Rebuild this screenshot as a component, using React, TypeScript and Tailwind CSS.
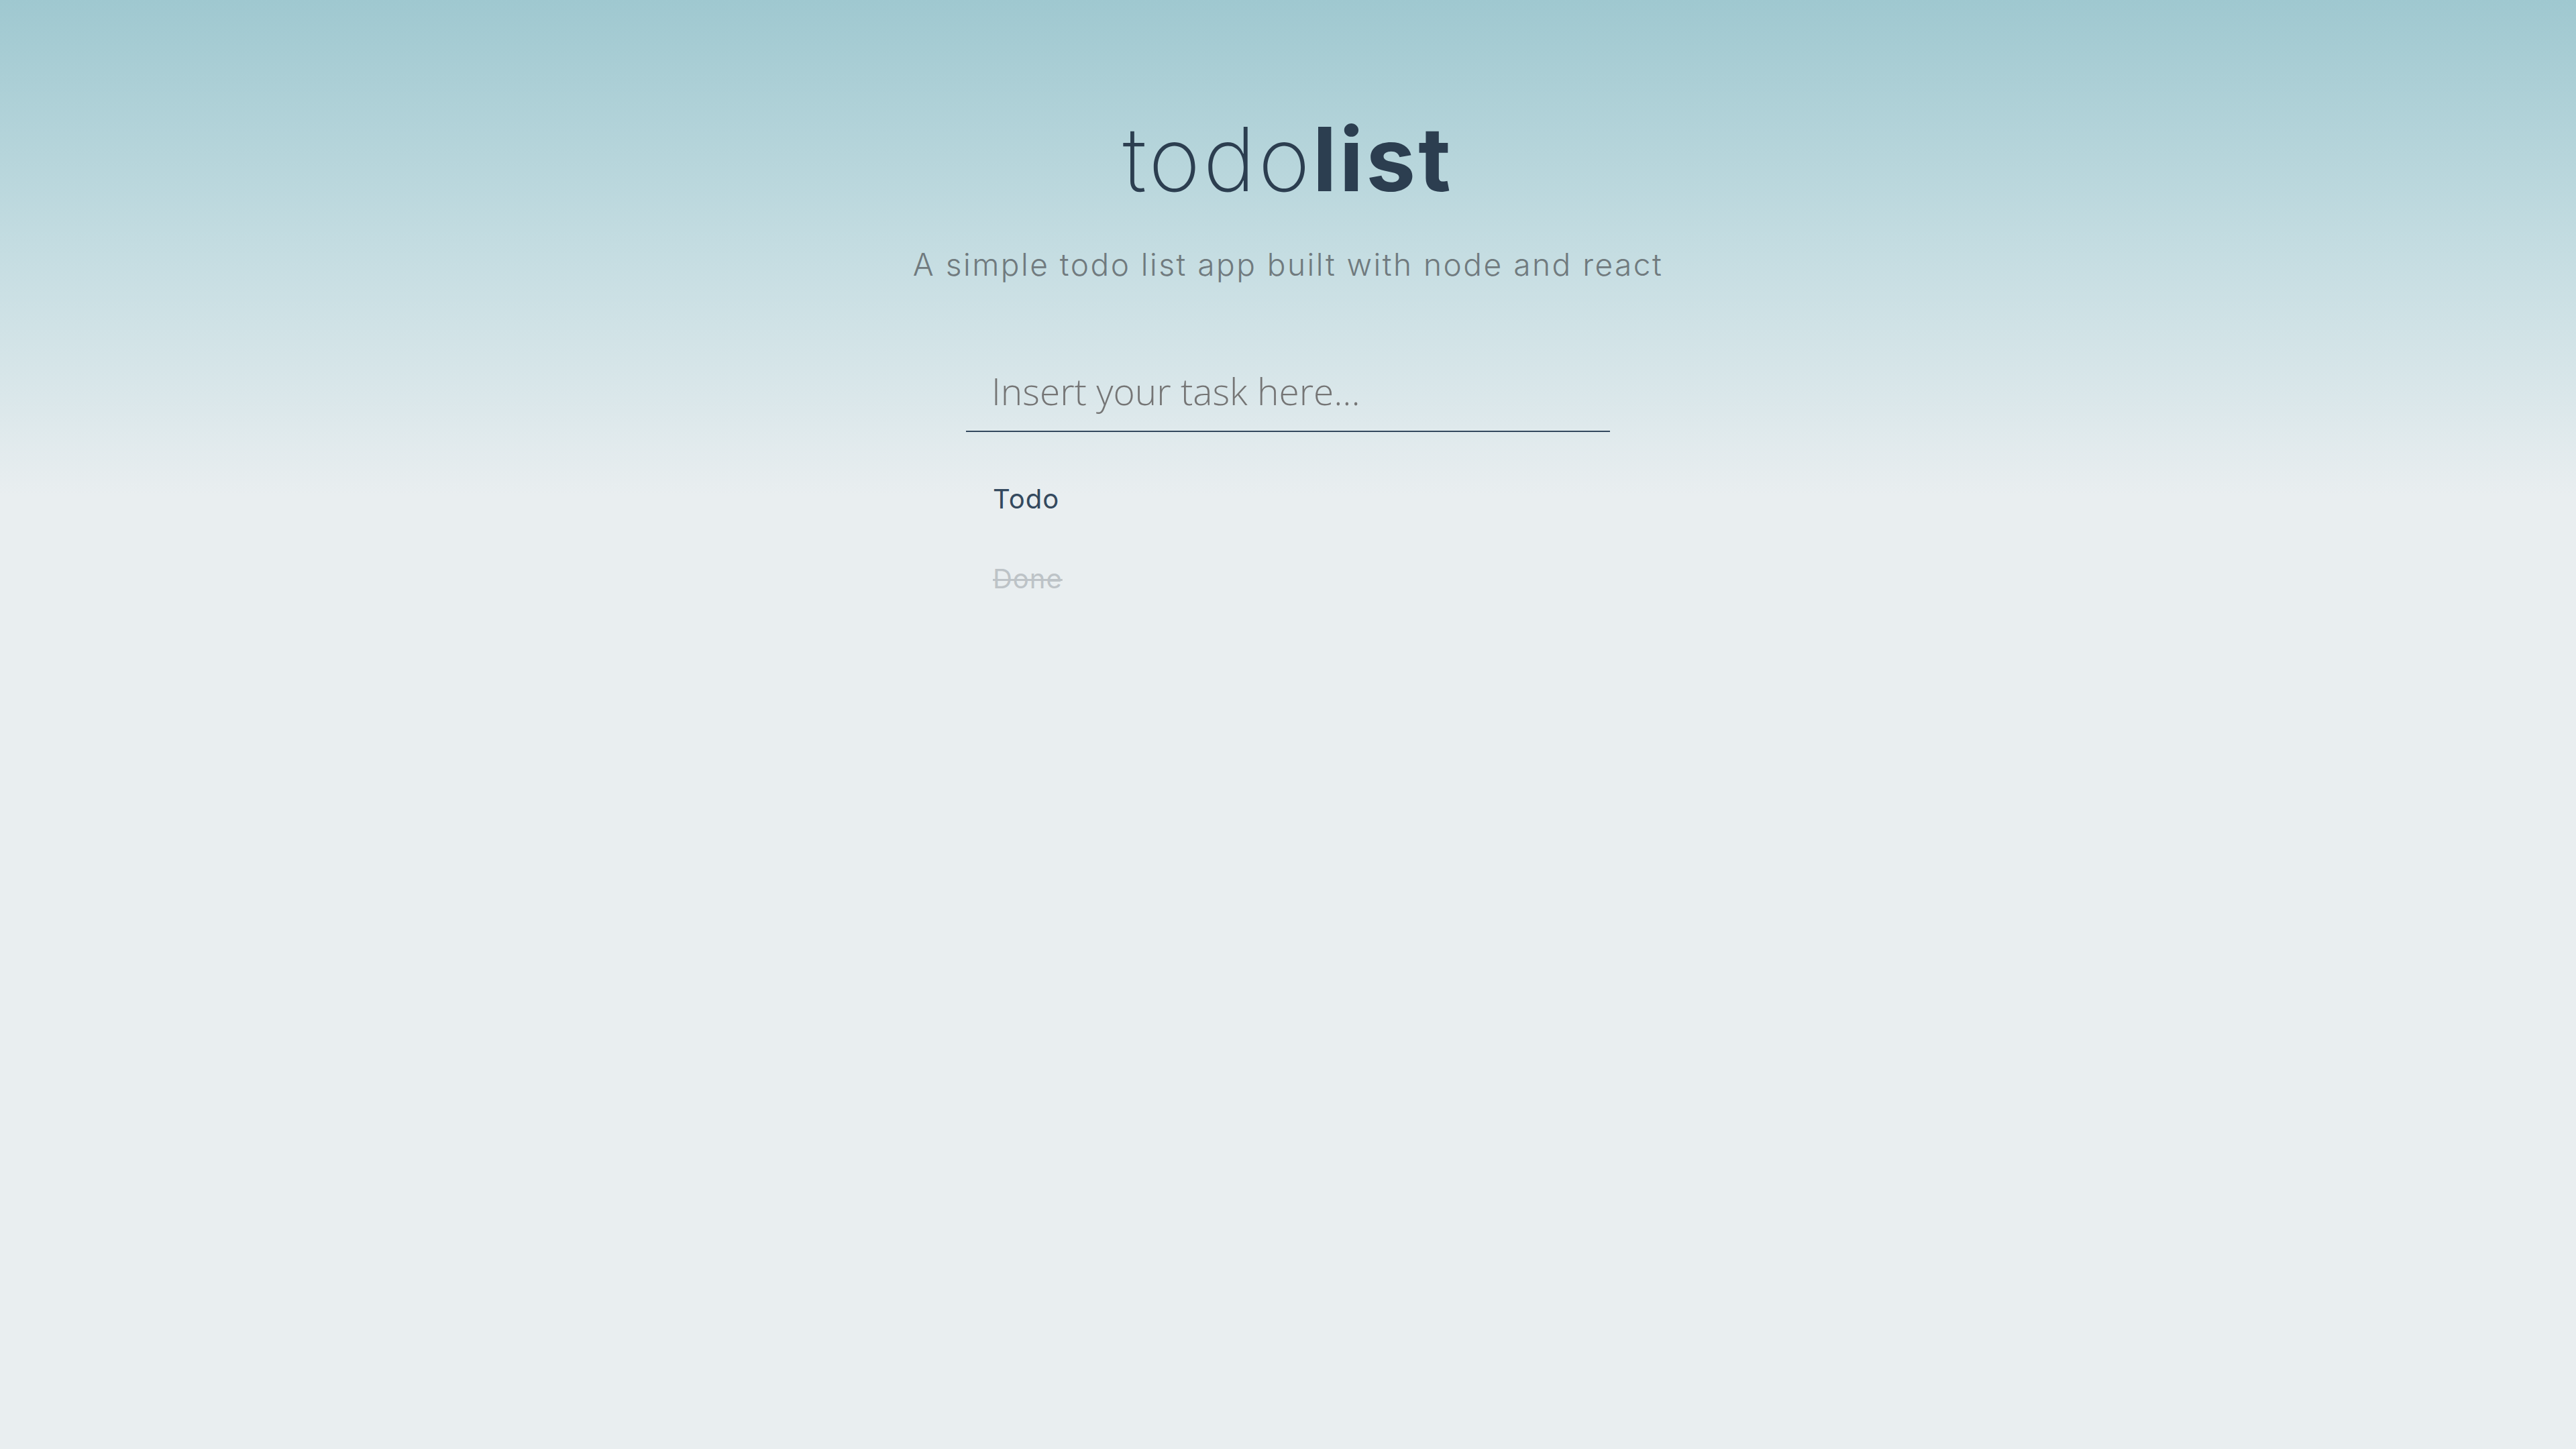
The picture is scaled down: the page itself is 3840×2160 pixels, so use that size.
const tasks = [
  { text: "Todo", done: false },
  { text: "Done", done: true },
];

export default function App() {
  return (
    <div className="min-h-screen w-full bg-[#e9eeef] bg-[linear-gradient(180deg,#9fc8d0_0px,#c3dce1_360px,#e9eef0_740px)]">
      <div className="flex flex-col items-center font-['Inter',sans-serif]">
        {/* Header */}
        <h1 className="mt-[172px] h-[130px] text-[132px] leading-[130px] tracking-[4px] text-[#2c3e50]">
          <span className="font-extralight">todo</span>
          <span className="font-bold">list</span>
        </h1>
        <p className="mt-[68px] h-[48px] text-[46px] leading-[48px] font-light tracking-[2.5px] text-[#707a7e]">
          A simple todo list app built with node and react
        </p>

        {/* Form + list */}
        <div className="mt-[124px] w-[960px]">
          <input
            type="text"
            placeholder="Insert your task here..."
            className="block h-[102px] w-full border-b-2 border-[#34495e] bg-transparent pb-[20px] pl-[38px] font-['Open_Sans',sans-serif] text-[55px] font-light text-[#2c3e50] outline-none placeholder:text-[#757575]"
          />
          <ul className="mt-[80px] flex flex-col gap-[79px] pl-[40px] tracking-[1px]">
            {tasks.map((t, i) => (
              <li
                key={i}
                className={
                  t.done
                    ? "h-[40px] text-[40px] leading-[40px] text-[#bdc3c7] line-through decoration-[3px]"
                    : "h-[40px] text-[40px] leading-[40px] text-[#34495e]"
                }
              >
                {t.text}
              </li>
            ))}
          </ul>
        </div>
      </div>
    </div>
  );
}
